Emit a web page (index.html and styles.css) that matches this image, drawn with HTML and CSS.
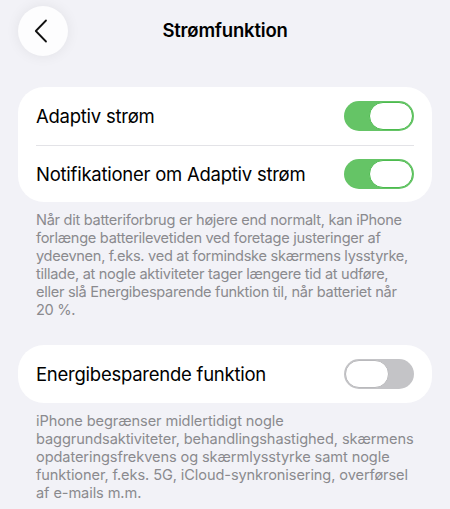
FILE: index.html
```html
<!DOCTYPE html>
<html lang="da">
<head>
<meta charset="utf-8">
<title>Strømfunktion</title>
<link rel="stylesheet" href="styles.css">
</head>
<body>
<header class="nav">
  <button class="back" aria-label="Tilbage">
    <svg width="14" height="24" viewBox="0 0 14 24"><path d="M12 1.5 L1.8 12 L12 22.5" fill="none" stroke="#111" stroke-width="1.8" stroke-linecap="round" stroke-linejoin="round"/></svg>
  </button>
  <h1 class="title">Strømfunktion</h1>
</header>
<main class="content">
  <section class="card">
    <div class="row">
      <span class="label">Adaptiv strøm</span>
      <span class="toggle on"><span class="knob"></span></span>
    </div>
    <div class="row">
      <span class="label">Notifikationer om Adaptiv strøm</span>
      <span class="toggle on"><span class="knob"></span></span>
    </div>
  </section>
  <p class="note tight">Når dit batteriforbrug er højere end normalt, kan iPhone forlænge batterilevetiden ved foretage justeringer af ydeevnen, f.eks. ved at formindske skærmens lysstyrke, tillade, at nogle aktiviteter tager længere tid at udføre, eller slå Energibesparende funktion til, når batteriet når 20 %.</p>
  <section class="card single">
    <div class="row">
      <span class="label">Energibesparende funktion</span>
      <span class="toggle off"><span class="knob"></span></span>
    </div>
  </section>
  <p class="note">iPhone begrænser midlertidigt nogle baggrundsaktiviteter, behandlingshastighed, skærmens opdateringsfrekvens og skærmlysstyrke samt nogle funktioner, f.eks. 5G, iCloud-synkronisering, overførsel af e-mails m.m.</p>
</main>
</body>
</html>
```
FILE: styles.css
```css
* { box-sizing: border-box; }
html, body { margin: 0; padding: 0; }
body {
  background: #f2f2f7;
  font-family: Inter, "Noto Sans", "Liberation Sans", sans-serif;
  color: #000;
  width: 450px;
  height: 509px;
  overflow: hidden;
}
.nav {
  position: relative;
  height: 87px;
  padding: 6px 18px 0;
}
.back {
  width: 50px;
  height: 50px;
  border-radius: 50%;
  border: none;
  background: #fdfdfe;
  box-shadow: 0 0 14px rgba(0,0,0,0.07);
  display: flex;
  align-items: center;
  justify-content: center;
  padding: 0 4px 0 0;
  margin: 0;
}
.title {
  position: absolute;
  left: 0;
  right: 0;
  top: 19px;
  margin: 0;
  text-align: center;
  font-size: 18.5px;
  font-weight: 600;
  line-height: 22px;
  letter-spacing: -0.2px;
}
.content {
  padding: 0 18px;
}
.card {
  background: #fff;
  border-radius: 26px;
  padding: 0 18px;
}
.row {
  display: flex;
  align-items: center;
  justify-content: space-between;
  height: 57.5px;
}
.row + .row {
  border-top: 1px solid #e3e3e7;
}
.single .row { height: 58px; }
.label {
  font-size: 18.5px;
  letter-spacing: -0.25px;
}
.toggle {
  position: relative;
  width: 70px;
  height: 30px;
  border-radius: 15px;
  display: flex;
  align-items: center;
  padding: 1px;
}
.toggle.on {
  background: #65c466;
  justify-content: flex-end;
}
.toggle.off {
  background: #c4c4c7;
  justify-content: flex-start;
}
.knob {
  width: 44px;
  height: 28px;
  border-radius: 14px;
  background: #fff;
}
.on .knob { border: 1px solid #4cbb4e; }
.off .knob { border: 1px solid #b9b9bc; }
.note {
  margin: 9px 0 26px;
  padding: 0 18px;
  font-size: 14.6px;
  line-height: 18px;
  color: #8a8a8e;
  letter-spacing: -0.1px;
}
.note.tight {
  padding-right: 16px;
  letter-spacing: -0.3px;
}
```
